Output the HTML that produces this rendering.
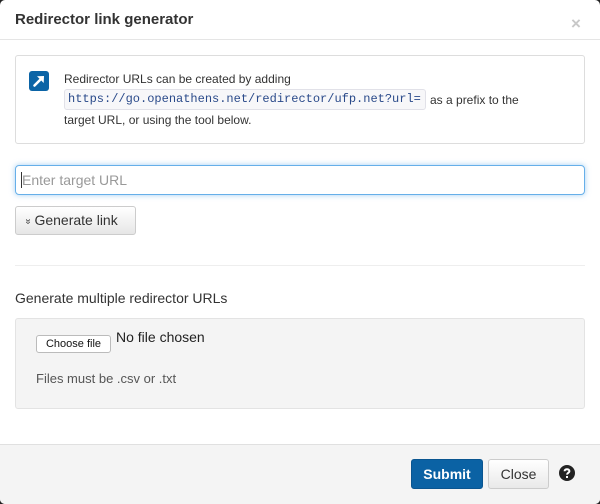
<!DOCTYPE html>
<html><head><meta charset="utf-8"><style>
*{box-sizing:border-box;margin:0;padding:0}
body{width:600px;height:504px;background:#222;font-family:"Liberation Sans",sans-serif;color:#333;position:relative;overflow:hidden}
.win{position:absolute;left:0;top:0;width:600px;height:504px;background:#fff;border-radius:5px;overflow:hidden}
.abs{position:absolute}
</style></head><body>
<div class="win">
  <div class="abs" style="left:15px;top:11px;font-size:15px;font-weight:bold;color:#333">Redirector link generator</div>
  <div class="abs" style="left:571px;top:14px;font-size:17px;font-weight:bold;color:#c8c8c8;line-height:20px">×</div>
  <div class="abs" style="left:0;top:39px;width:600px;height:1px;background:#e5e5e5"></div>

  <div class="abs" style="left:15px;top:55px;width:570px;height:89px;border:1px solid #ddd;border-radius:3px"></div>
  <svg class="abs" style="left:29px;top:71px" width="20" height="20" viewBox="0 0 20 20">
    <rect width="20" height="20" rx="3" fill="#0b64a6"/>
    <path d="M5.5 14.5 L13 7" stroke="#fff" stroke-width="2.6" stroke-linecap="round"/>
    <path d="M8 5.3 L15 5 L14.7 12 Z" fill="#fff"/>
  </svg>
  <div class="abs" style="left:64px;top:72px;font-size:12px;line-height:14px">Redirector URLs can be created by adding</div>
  <div class="abs" style="left:64px;top:89px;height:21px;padding:0 3px;background:#f7f7f9;border:1px solid #e1e1e8;border-radius:3px;font-family:'Liberation Mono',monospace;font-size:12px;line-height:19px;color:#2a4a8a;width:362px;white-space:nowrap;overflow:hidden">https://go.openathens.net/redirector/ufp.net?url=</div>
  <div class="abs" style="left:430px;top:93px;font-size:12px;line-height:14px">as a prefix to the</div>
  <div class="abs" style="left:64px;top:113px;font-size:12px;line-height:14px">target URL, or using the tool below.</div>

  <div class="abs" style="left:15px;top:165px;width:570px;height:30px;border:1px solid #66afe9;border-radius:4px;box-shadow:0 0 6px rgba(102,175,233,.6)"></div>
  <div class="abs" style="left:21px;top:172px;width:1px;height:16px;background:#333"></div>
  <div class="abs" style="left:22px;top:172px;font-size:14px;color:#999;line-height:16px">Enter target URL</div>

  <div class="abs" style="left:15px;top:206px;width:121px;height:29px;border:1px solid #ccc;border-radius:3px;background:linear-gradient(#fff,#e6e6e6);font-size:14px;line-height:27px;padding-left:9px;color:#333"><span style="font-size:10px;position:relative;top:-1px;display:inline-block;transform:rotate(90deg)">»</span> Generate link</div>

  <div class="abs" style="left:15px;top:265px;width:570px;height:1px;background:#eee"></div>
  <div class="abs" style="left:15px;top:290px;font-size:14px;line-height:16px">Generate multiple redirector URLs</div>

  <div class="abs" style="left:15px;top:318px;width:570px;height:91px;background:#f4f4f4;border:1px solid #e3e3e3;border-radius:3px"></div>
  <div class="abs" style="left:36px;top:335px;width:75px;height:18px;background:#fff;border:1px solid #bbb;border-radius:3px;font-size:11px;line-height:16px;text-align:center;color:#111">Choose file</div>
  <div class="abs" style="left:116px;top:329px;font-size:14px;line-height:16px;color:#222">No file chosen</div>
  <div class="abs" style="left:36px;top:371px;font-size:13px;line-height:16px;color:#555">Files must be .csv or .txt</div>

  <div class="abs" style="left:0;top:444px;width:600px;height:60px;background:#f4f4f4;border-top:1px solid #e0e0e0"></div>
  <div class="abs" style="left:411px;top:459px;width:72px;height:30px;background:#0b62a4;border:1px solid #0a5590;border-radius:3px;color:#fff;font-weight:bold;font-size:14px;line-height:28px;text-align:center">Submit</div>
  <div class="abs" style="left:488px;top:459px;width:61px;height:30px;background:linear-gradient(#fff,#e9e9e9);border:1px solid #ccc;border-radius:3px;font-size:14px;line-height:28px;text-align:center;color:#333">Close</div>
  <svg class="abs" style="left:559px;top:465px" width="16" height="16" viewBox="0 0 16 16">
    <circle cx="8" cy="8" r="8" fill="#222"/>
    <path d="M5.6 6.2 C5.6 3.6 10.4 3.6 10.4 6.2 C10.4 7.8 8 7.8 8 9.6" stroke="#fff" stroke-width="2" fill="none"/>
    <rect x="7" y="11" width="2" height="2" fill="#fff"/>
  </svg>
</div>
</body></html>
